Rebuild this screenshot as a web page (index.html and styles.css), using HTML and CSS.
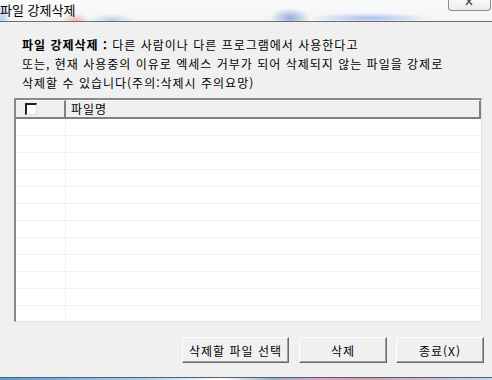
FILE: index.html
```html
<!DOCTYPE html>
<html lang="ko">
<head>
    <meta charset="UTF-8">
    <meta name="viewport" content="width=device-width, initial-scale=1.0">
    <title>파일 강제삭제</title>
    <link rel="stylesheet" href="styles.css">
</head>
<body>

    <div class="titlebar">
        <span class="title">파일 강제삭제</span>
        <span class="close">
            <svg width="12" height="6" viewBox="0 0 12 6"><path d="M2 -2 L8 5 M8 -2 L2 5" stroke="#5a5a5a" stroke-width="1.6" fill="none"/></svg>
        </span>
    </div>

    <div class="dialog">
        <p class="desc">
            <b>파일 강제삭제 :</b> 다른 사람이나 다른 프로그램에서 사용한다고<br>
            또는, 현재 사용중의 이유로 엑세스 거부가 되어 삭제되지 않는 파일을 강제로<br>
            삭제할 수 있습니다(주의:삭제시 주의요망)
        </p>

        <div class="grid">
            <div class="grid-head">
                <div class="cell-check"><span class="checkbox"></span></div>
                <div class="cell-name">파일명</div>
            </div>
            <div class="grid-body" id="rows"></div>
        </div>

        <div class="buttons">
            <button class="btn btn-wide">삭제할 파일 선택</button>
            <button class="btn">삭제</button>
            <button class="btn">종료(X)</button>
        </div>
    </div>

    <div class="taskbar"></div>

    <script>
        const rows = document.getElementById("rows");
        for (let i = 0; i < 12; i++) {
            rows.innerHTML += '<div class="row"><div class="cell-check"></div><div class="cell-name"></div></div>';
        }
    </script>

</body>
</html>
```

FILE: styles.css
```css
body { margin: 0; width: 492px; height: 380px; overflow: hidden; background: #f0f0f0; font-family: "Noto Sans CJK KR", "DejaVu Sans", sans-serif; font-size: 12px; color: #000; }

.titlebar { height: 21px; display: flex; justify-content: space-between; align-items: flex-start; border-bottom: 1px solid #6e6e6e;
    background:
        radial-gradient(ellipse 14px 9px at 76px 22px, rgba(230, 120, 100, 0.55), transparent),
        radial-gradient(ellipse 22px 6px at 112px 20px, rgba(90, 140, 220, 0.35), transparent),
        radial-gradient(ellipse 20px 10px at 290px 18px, rgba(70, 120, 190, 0.55), transparent),
        radial-gradient(ellipse 60px 5px at 370px 18px, rgba(60, 110, 230, 0.4), transparent),
        radial-gradient(ellipse 8px 14px at 2px 18px, rgba(80, 150, 230, 0.4), transparent),
        linear-gradient(#fbfbfb, #f2f4f6); }
.title { font-size: 13px; line-height: 20px; padding-left: 0; }
.close { display: flex; justify-content: center; align-items: flex-start; width: 41px; height: 10px; margin-right: 1px; border: 1px solid #8a8a8a; border-top: none; border-radius: 0 0 4px 4px; background: linear-gradient(#f8f8f8, #ececec); }

.dialog { padding: 0 8px 0 14px; height: 355px; box-sizing: border-box; }
.desc { margin: 0; padding: 13px 0 0 8px; line-height: 19px; height: 63px; letter-spacing: 1px; }
.desc b { font-weight: bold; }

.grid { width: 468px; height: 224px; box-sizing: border-box; border: 2px solid #8a8a8a; border-right: 1px solid #e2e2e2; border-bottom: 1px solid #e2e2e2; background: #fff; }
.grid-head { display: flex; height: 19px; background: #efefef; }
.grid-head .cell-check, .grid-head .cell-name { box-sizing: border-box; border-right: 2px solid #808080; border-bottom: 2px solid #808080; border-top: 1px solid #fff; }
.grid-head .cell-name { flex: 1; padding-left: 5px; line-height: 16px; letter-spacing: 1px; }
.cell-check { width: 50px; flex: none; box-sizing: border-box; }
.grid-head .cell-check { padding: 2px 0 0 9px; }
.checkbox { display: block; width: 12px; height: 12px; box-sizing: border-box; background: #fff; border-top: 2px solid #222; border-left: 2px solid #222; border-right: 1px solid #d8d8d8; border-bottom: 1px solid #d8d8d8; }

.row { display: flex; height: 17px; box-sizing: border-box; border-bottom: 1px solid #f0f0f0; }
.row .cell-check { border-right: 1px solid #f0f0f0; }
.row .cell-name { flex: 1; }

.buttons { display: flex; justify-content: flex-end; gap: 9px; margin-top: 15px; }
.btn { width: 88px; height: 26px; padding: 0; font-family: inherit; font-size: 12px; letter-spacing: 1px; color: #000; background: #f0f0f0; border: 1px solid; border-color: #fff #6a6a6a #6a6a6a #fff; box-shadow: inset -1px -1px #a0a0a0; }
.btn-wide { width: 107px; margin-right: 1px; }

.taskbar { height: 3px; border-top: 1px solid #55606c; background: linear-gradient(90deg, #5a9ad8, #a8d0f0 30%, #ffffff 45%, #9ab0c8 55%, #e0a0c8 65%, #d0a0b0 75%, #c0d8f0); }
```
